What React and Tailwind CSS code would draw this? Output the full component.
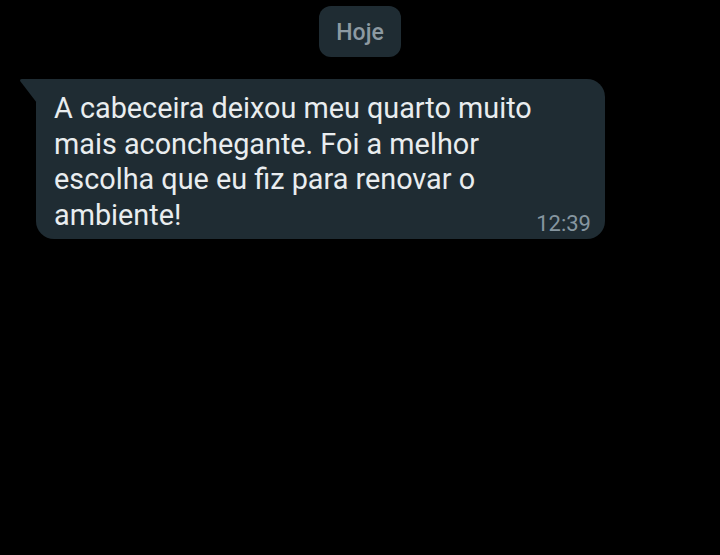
import React from 'react';

const App = () => {
  return (
    <div className="w-[720px] h-[555px] bg-black overflow-hidden" style={{ fontFamily: 'Roboto, "Noto Sans", sans-serif' }}>
      <div className="flex justify-center pt-[6px]">
        <div className="h-[51px] px-[17px] pt-[4px] flex items-center rounded-[12px] bg-[#1f2c33] text-[#8d9aa2] text-[23px] font-medium">
          Hoje
        </div>
      </div>

      {/* message bubble */}
      <div className="relative mt-[22px] ml-[36px] w-[569px]">
        <svg className="absolute -left-[17px] top-0" width="18" height="24" viewBox="0 0 18 24">
          <path d="M18 0 H3 Q0 0 1.5 2.5 L18 24 Z" fill="#1f2c33" />
        </svg>
        <div className="bg-[#1f2c33] rounded-[18px] rounded-tl-none pl-[18px] pr-[14px] pt-[12px] pb-[2px] flex flex-col">
          <p className="text-[#e9edef] text-[28.8px] leading-[35.5px]">
            A cabeceira deixou meu quarto muito<br />
            mais aconchegante. Foi a melhor<br />
            escolha que eu fiz para renovar o<br />
            ambiente!
          </p>
          <span className="self-end -mt-[22px] text-[#8696a0] text-[22px] leading-[26px]">12:39</span>
        </div>
      </div>
    </div>
  );
};

export default App;
